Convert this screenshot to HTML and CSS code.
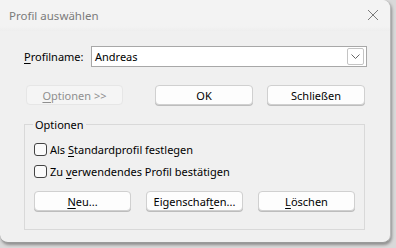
FILE: index.html
```html
<!DOCTYPE html>
<html>
<head>
<meta charset="utf-8">
<link rel="stylesheet" href="styles.css">
</head>
<body>
<div class="window">
  <div class="titlebar">
    <span class="title">Profil auswählen</span>
    <svg class="close" width="12" height="12" viewBox="0 0 12 12"><path d="M1 1L11 11M11 1L1 11" stroke="#7a7a7a" stroke-width="1" fill="none"/></svg>
  </div>
  <div class="content">
    <div class="row-name">
      <span class="label"><u>P</u>rofilname:</span>
      <div class="combo">
        <span class="combo-text">Andreas</span>
        <span class="combo-btn"><svg width="9" height="5" viewBox="0 0 9 5"><path d="M0.5 0.5L4.5 4.5L8.5 0.5" stroke="#666" stroke-width="1" fill="none"/></svg></span>
      </div>
    </div>
    <div class="row-buttons">
      <span class="btn disabled"><u>O</u>ptionen &gt;&gt;</span>
      <span class="btn ok">OK</span>
      <span class="btn">Schließen</span>
    </div>
    <div class="group">
      <span class="group-label">Optionen</span>
      <div class="check"><span class="box"></span><span>Als <u>S</u>tandardprofil festlegen</span></div>
      <div class="check"><span class="box"></span><span>Zu <u>v</u>erwendendes Profil bestätigen</span></div>
      <div class="group-buttons">
        <span class="btn"><u>N</u>eu...</span>
        <span class="btn">Eigenschaf<u>t</u>en...</span>
        <span class="btn"><u>L</u>öschen</span>
      </div>
    </div>
  </div>
</div>
</body>
</html>
```

FILE: styles.css
```css
* { box-sizing: border-box; }
html, body { margin: 0; padding: 0; }
body {
  width: 396px; height: 248px;
  background: #d9d9d9;
  font-family: "Noto Sans", "Open Sans", sans-serif;
  font-size: 11px;
  color: #000;
  overflow: hidden;
}
.window {
  width: 391px; height: 243px;
  background: #f0f0f0;
  border-radius: 0 8px 8px 8px;
  border-right: 1px solid #b8b8b8;
  border-bottom: 1px solid #9a9a9a;
  box-shadow: 1px 2px 3px rgba(0,0,0,0.35);
  display: flex; flex-direction: column;
}
.titlebar {
  height: 31px;
  display: flex; align-items: center; justify-content: space-between;
  padding: 0 11px 0 9px;
  background: linear-gradient(#f3f3f3, #f3f3f3 85%, #eeeeee);
  border-radius: 0 8px 0 0;
}
.title { color: #7b7b7b; font-size: 11.5px; }
.close { display: block; margin-top: -1px; }
.content { padding: 15px 0 0 24px; display: flex; flex-direction: column; }
.row-name { display: flex; align-items: center; height: 21px; }
.label { width: 67px; }
u { text-decoration: underline; text-underline-offset: 2px; }
.combo {
  width: 276px; height: 21px;
  background: #fff; border: 1px solid #a8a8a8;
  display: flex; align-items: center; justify-content: space-between;
  padding: 0 2px 0 3px;
}
.combo-btn {
  width: 17px; height: 17px; border: 1px solid #c4c4c4; border-radius: 2px;
  display: flex; align-items: center; justify-content: center;
}
.row-buttons { display: flex; margin: 18px 0 0 2px; height: 20px; }
.btn {
  width: 98px; height: 20px;
  background: #fdfdfd; border: 1px solid #d0d0d0; border-radius: 4px;
  display: flex; align-items: center; justify-content: center;
  box-shadow: 0 1px 0 #bdbdbd;
}
.row-buttons .btn.ok { margin-left: 32px; }
.row-buttons .btn + .btn + .btn { margin-left: 14px; }
.btn.disabled { background: #f5f5f5; border-color: #e6e6e6; color: #8f8f8f; box-shadow: none; width: 97px; }
.group {
  position: relative;
  margin-top: 19px;
  width: 341px; height: 106px;
  border: 1px solid #d9d9d9;
  padding: 13px 0 0 9px;
}
.group-label {
  position: absolute; top: -8px; left: 8px;
  background: #f0f0f0; padding: 0 2px;
  line-height: 15px;
}
.check { display: flex; align-items: center; height: 18px; margin-top: 2px; }
.check + .check { margin-top: 4px; }
.box {
  width: 13px; height: 13px; border: 1px solid #444; border-radius: 3px;
  background: #fbfbfb; margin-right: 3px;
}
.group-buttons { display: flex; gap: 15px; margin: 11px 0 0 0; }
.group-buttons .btn { width: 97px; }
```
